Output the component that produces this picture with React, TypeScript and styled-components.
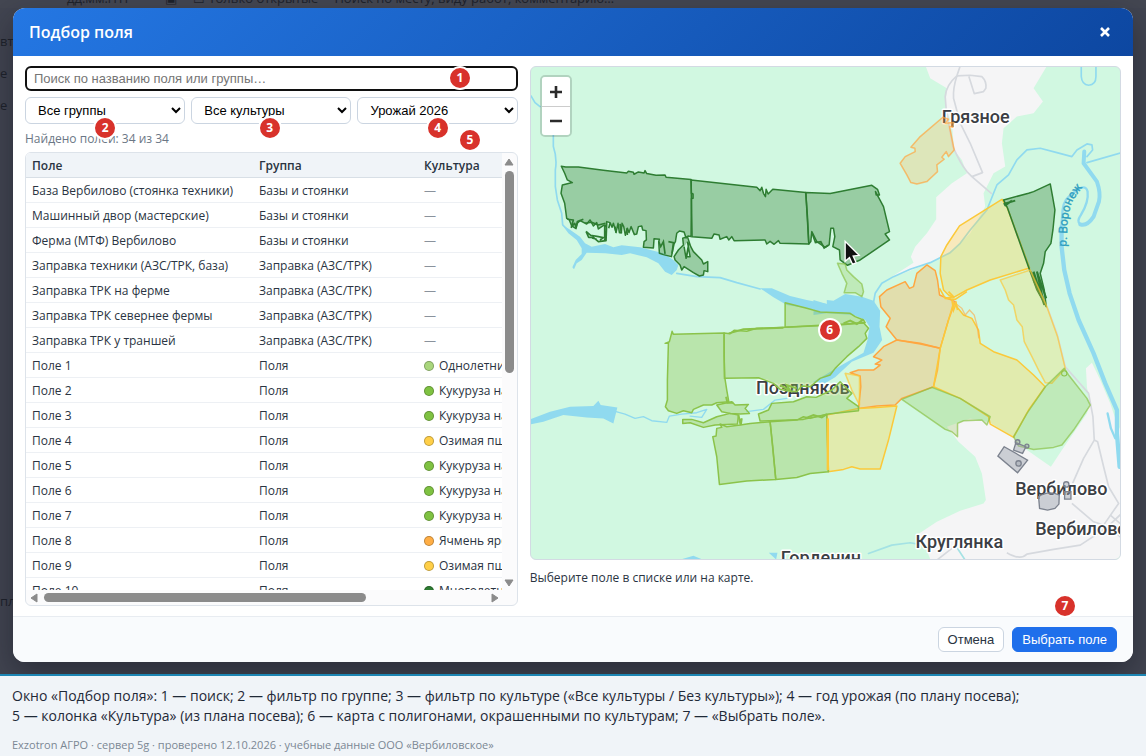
import React from "react";
import styled, { createGlobalStyle } from "styled-components";

const UI = `"Open Sans", "Noto Sans", sans-serif`;
const CONTROL = `"Liberation Sans", Arial, sans-serif`;

const GlobalStyle = createGlobalStyle`
  *, *::before, *::after { box-sizing: border-box; }
  body { margin: 0; font-family: ${UI}; color: #2a3442; background: #f0f4f8; }
`;

const Page = styled.div`
  display: flex;
  flex-direction: column;
  min-height: 100vh;
`;

/* Dimmed application with the dialog lying over it */
const Stage = styled.main`
  flex: 1;
  display: grid;
  background: #424551;
  overflow: hidden;
  & > * { grid-area: 1 / 1; min-width: 0; }
`;

const DimmedApp = styled.div`
  display: flex;
  flex-direction: column;
  overflow: hidden;
  font-size: 13px;
  color: #1e222b;
`;

const DimmedToolbar = styled.div`
  display: flex;
  gap: 16px;
  height: 8px;
  padding-left: 67px;
  line-height: 20px;
  white-space: nowrap;
  overflow: hidden;
  align-items: flex-end;
  background: #444752;
  & > span { flex: none; }
  & > span:first-child { width: 82px; }
`;

const DimmedRows = styled.div`
  display: flex;
  flex-direction: column;
  padding: 17px 0 0;
  line-height: 32px;
`;

const DimmedFoot = styled.div`
  margin-top: auto;
  padding-bottom: 64px;
  line-height: 18px;
`;

const Dialog = styled.section`
  display: flex;
  flex-direction: column;
  margin: 8px 13px 12px;
  border-radius: 12px;
  background: #fff;
  overflow: hidden;
  z-index: 1;
  box-shadow: 0 12px 32px rgba(15, 18, 28, 0.45);
`;

const DialogHeader = styled.header`
  display: flex;
  align-items: center;
  justify-content: space-between;
  height: 48px;
  padding: 0 20px 0 16px;
  background: linear-gradient(135deg, #2477e3, #0d47a1);
  color: #fff;
`;

const Title = styled.h1`
  margin: 0;
  font-size: 16px;
  font-weight: 600;
  line-height: 24px;
`;

const CloseButton = styled.button`
  display: flex;
  padding: 0;
  border: 0;
  background: none;
  color: #fff;
`;

const DialogBody = styled.div`
  flex: 1;
  display: grid;
  grid-template-columns: 5fr 6fr;
  gap: 12px;
  padding: 10px 12px;
`;

const Column = styled.div`
  display: flex;
  flex-direction: column;
  min-width: 0;
`;

const Anchor = styled.div`
  position: relative;
  min-width: 0;
`;

const Badge = styled.span<{ $left: string; $top: number }>`
  position: absolute;
  z-index: 2;
  left: ${(p) => p.$left};
  top: ${(p) => p.$top}px;
  width: 24px;
  height: 24px;
  margin: -12px 0 0 -12px;
  border: 2px solid #fff;
  border-radius: 50%;
  background: #d8322b;
  color: #fff;
  font-size: 12px;
  font-weight: 700;
  line-height: 20px;
  text-align: center;
`;

const SearchInput = styled.input`
  display: block;
  width: 100%;
  height: 25px;
  padding: 0 7px;
  border: 2px solid #101010;
  border-radius: 6px;
  outline: none;
  font: 13px ${CONTROL};
  &::placeholder { color: #757575; opacity: 1; }
`;

const Filters = styled.div`
  display: grid;
  grid-template-columns: repeat(3, 1fr);
  gap: 6px;
  margin-top: 6px;
`;

const Select = styled.select`
  display: block;
  width: 100%;
  height: 27px;
  padding: 0 8px;
  border: 1px solid #cbd5e1;
  border-radius: 6px;
  background-color: #fff;
  color: #000;
  font: 13px ${CONTROL};
`;

const Count = styled.p`
  margin: 6px 0 4px;
  font-size: 12px;
  line-height: 18px;
  color: #6b7785;
`;

const ListBox = styled.div`
  flex: 1 1 0;
  min-height: 0;
  display: grid;
  grid-template-columns: minmax(0, 1fr) 15px;
  grid-template-rows: minmax(0, 1fr) 15px;
  border: 1px solid #dde3ea;
  border-radius: 6px;
  background: #fbfbfc;
  overflow: hidden;
`;

const TableViewport = styled.div`
  overflow: hidden;
  background: #fff;
`;

const Table = styled.table`
  width: 700px;
  table-layout: fixed;
  border-collapse: separate;
  border-spacing: 0;
  font-size: 12px;
  line-height: 16px;
  white-space: nowrap;
`;

const HeadCell = styled.th<{ $width?: number }>`
  width: ${(p) => (p.$width ? `${p.$width}px` : "auto")};
  height: 25px;
  padding: 1px 6px 0;
  border-bottom: 1px solid #d8dfe6;
  background: #f0f4f8;
  font-weight: 600;
  text-align: left;
`;

const Cell = styled.td<{ $muted?: boolean }>`
  height: 25px;
  padding: 1px 6px 0;
  border-bottom: 1px solid #edf0f4;
  color: ${(p) => (p.$muted ? "#8a929c" : "inherit")};
`;

const Crop = styled.span`
  display: flex;
  align-items: center;
  gap: 5px;
`;

const Dot = styled.i<{ $color: string }>`
  flex: none;
  width: 10px;
  height: 10px;
  border: 1px solid rgba(0, 0, 0, 0.25);
  border-radius: 50%;
  background: ${(p) => p.$color};
`;

const ScrollBar = styled.div<{ $vertical?: boolean }>`
  display: flex;
  flex-direction: ${(p) => (p.$vertical ? "column" : "row")};
  align-items: center;
  justify-content: space-between;
  padding: ${(p) => (p.$vertical ? "5px 0 3px" : "0 3px 0 4px")};
  color: #8b8b8b;
`;

const ScrollTrack = styled.div<{ $vertical?: boolean }>`
  flex: 1;
  display: flex;
  flex-direction: ${(p) => (p.$vertical ? "column" : "row")};
  margin: ${(p) => (p.$vertical ? "5px 0" : "0 6px")};
`;

const Thumb = styled.div<{ $vertical?: boolean }>`
  width: ${(p) => (p.$vertical ? "9px" : "73%")};
  height: ${(p) => (p.$vertical ? "50%" : "9px")};
  border-radius: 5px;
  background: #8b8b8b;
`;

const MapBox = styled.div`
  position: relative;
  flex: 1;
  min-height: 0;
  border: 1px solid #d3dae3;
  border-radius: 6px;
  background: #d1f8e1;
  overflow: hidden;
`;

const MapDrawing = styled.svg`
  position: absolute;
  inset: 0;
  display: block;
  width: 100%;
  height: 100%;
`;

const ZoomControl = styled.div`
  position: absolute;
  top: 8px;
  left: 9px;
  display: flex;
  flex-direction: column;
  border: 2px solid rgba(0, 0, 0, 0.15);
  border-radius: 5px;
  background-clip: padding-box;
  overflow: hidden;
`;

const ZoomButton = styled.button`
  display: flex;
  align-items: center;
  justify-content: center;
  width: 28px;
  height: 29px;
  padding: 0;
  border: 0;
  background: #fff;
  color: #2b2b2b;
  & + & { border-top: 1px solid #ccc; }
`;

const MapHint = styled.p`
  min-height: 37px;
  margin: 9px 0 0;
  font-size: 12px;
  line-height: 18px;
`;

const DialogFooter = styled.footer`
  position: relative;
  display: flex;
  justify-content: flex-end;
  gap: 8px;
  padding: 10px 16px;
  border-top: 1px solid #e8ecf1;
  background: #f9fbfd;
`;

const Button = styled.button<{ $primary?: boolean }>`
  height: 25px;
  padding: 0 9px;
  border: 1px solid ${(p) => (p.$primary ? "#1f6feb" : "#cbd5e1")};
  border-radius: 6px;
  background: ${(p) => (p.$primary ? "#1f6feb" : "#fff")};
  color: ${(p) => (p.$primary ? "#fff" : "#2a3442")};
  font: 13px ${CONTROL};
`;

const Caption = styled.footer`
  padding: 10px 12px 2px;
  border-top: 2px solid #1d86b4;
  background: #f0f4f8;
`;

const CaptionText = styled.p`
  margin: 0;
  font-size: 14px;
  line-height: 20px;
  color: #1f2937;
`;

const CaptionMeta = styled.p`
  margin: 9px 0 0;
  font-size: 11px;
  line-height: 19px;
  color: #7b8794;
`;

const CROPS = {
  annual: { name: "Однолетние травы", color: "#a9d67c" },
  corn: { name: "Кукуруза на силос", color: "#7fc242" },
  wheat: { name: "Озимая пшеница", color: "#ffcf48" },
  barley: { name: "Ячмень яровой", color: "#ffae45" },
  perennial: { name: "Многолетние травы", color: "#2e7d32" },
};

type Row = { name: string; group: string; crop?: keyof typeof CROPS };

const ROWS: Row[] = [
  { name: "База Вербилово (стоянка техники)", group: "Базы и стоянки" },
  { name: "Машинный двор (мастерские)", group: "Базы и стоянки" },
  { name: "Ферма (МТФ) Вербилово", group: "Базы и стоянки" },
  { name: "Заправка техники (АЗС/ТРК, база)", group: "Заправка (АЗС/ТРК)" },
  { name: "Заправка ТРК на ферме", group: "Заправка (АЗС/ТРК)" },
  { name: "Заправка ТРК севернее фермы", group: "Заправка (АЗС/ТРК)" },
  { name: "Заправка ТРК у траншей", group: "Заправка (АЗС/ТРК)" },
  { name: "Поле 1", group: "Поля", crop: "annual" },
  { name: "Поле 2", group: "Поля", crop: "corn" },
  { name: "Поле 3", group: "Поля", crop: "corn" },
  { name: "Поле 4", group: "Поля", crop: "wheat" },
  { name: "Поле 5", group: "Поля", crop: "corn" },
  { name: "Поле 6", group: "Поля", crop: "corn" },
  { name: "Поле 7", group: "Поля", crop: "corn" },
  { name: "Поле 8", group: "Поля", crop: "barley" },
  { name: "Поле 9", group: "Поля", crop: "wheat" },
  { name: "Поле 10", group: "Поля", crop: "perennial" },
];

const WATER = "#90daef";
const LAND = "#f5f5f6";
const ROAD = "#d6d9de";

const DARK = "#2e7d32";
const GREEN = "#8bc34a";
const YELLOW = "#fbc93a";
const ORANGE = "#ffa640";

const FILLS: Record<string, string> = {
  [DARK]: "#2e7d32",
  [GREEN]: "#8bc34a",
  [YELLOW]: "#ffd54f",
  [ORANGE]: "#ffb04d",
};

function Field({ stroke, d, light }: { stroke: string; d: string; light?: boolean }) {
  return (
    <path
      d={d}
      fill={FILLS[stroke]}
      fillOpacity={light ? 0.26 : 0.35}
      stroke={stroke}
      strokeOpacity={light ? 0.7 : 1}
      strokeWidth="4.5"
      strokeLinejoin="round"
    />
  );
}

function FieldMap() {
  return (
    <MapDrawing viewBox="3 21 1767 1476" preserveAspectRatio="xMidYMid slice" role="img" aria-label="Карта полей">
      {/* settlements */}
      <g fill={LAND}>
        <path transform="translate(870 0)" d="M315 15 330 55 380 85 375 140 395 190 402 270 425 300 440 340 395 370 348 412 348 478 320 520 285 560 272 590 280 608 215 650 250 640 330 608 400 570 450 520 495 440 490 400 520 340 555 320 545 250 550 205 590 170 640 160 668 125 640 85 682 15Z" />
        <path transform="translate(870 690)" d="M797 235 815 218 840 270 870 340 890 400 912 440V820H335L318 775 290 735 350 695 420 662 490 640 497 630 485 550 465 500 415 455 380 410 450 385 505 395 580 440 620 480 692 530 725 480 800 370 808 340 800 290Z" />
      </g>
      {/* roads */}
      <g fill="none" stroke={ROAD} strokeWidth="5" strokeLinejoin="round">
        <g transform="translate(870 0)">
          <path d="M420 18 410 48Q378 75 375 110L378 150 398 260Q420 310 440 335L455 350 515 402" />
          <path d="M410 48Q398 85 400 115L420 190 450 250 487 338 455 350M410 48 450 46 485 50Q500 65 497 85L490 95 462 101 446 50" />
        </g>
        <g transform="translate(870 690)">
          <path d="M680 50 710 130 735 230 805 310 818 380 822 450 790 505 757 580M822 450 832 455 850 530 865 590 895 640 850 705 820 695 755 640" />
          <path d="M350 810 395 775M560 788Q600 812 620 792L700 778 780 765 860 712 902 672M870 675 905 705M862 706 905 745" />
        </g>
      </g>
      {/* rivers */}
      <g fill="none" stroke={WATER} strokeWidth="5" strokeLinecap="round" strokeLinejoin="round">
        <path d="M3 108 15 128 30 140M70 225 70 260Q82 295 76 330L76 380 82 420 95 460 98 495 115 512M440 640 500 650 570 653 620 668 690 687" />
        <path transform="translate(0 690)" strokeWidth="4" d="M258 365 285 372 315 385 340 380 365 392 410 397 418 378 455 372 500 368 530 358 515 382 480 378M650 365 700 358 735 330 770 325" />
        <path transform="translate(870 0)" d="M160 728 165 700 185 670 220 650 270 628 330 608 390 578 420 550 450 510 500 450 520 400 530 375 565 345 590 300 620 270 660 265 710 278 755 290 770 270 800 252 815 255 817 270 800 290M905 278 800 308M783 15V50Q785 75 805 76 827 75 827 50V15" />
        <path transform="translate(870 0)" strokeWidth="12" d="M792 275 790 310 830 365Q842 400 836 425L820 470Q800 500 780 493" />
        <path transform="translate(870 0)" strokeWidth="7" d="M780 493Q768 485 782 465 806 425 802 395 795 370 765 395 730 415 727 450L722 520" />
        <path transform="translate(870 0)" strokeWidth="13" d="M724 500V560L732 630 748 700 775 780 820 880 855 970 890 1050 890 1120 898 1220" />
        <path transform="translate(870 690)" strokeWidth="7" d="M862 370 872 415 885 445" />
        <path transform="translate(870 690)" stroke="#a4e2e4" d="M145 790 215 765 270 758 310 765M412 775 435 810" />
      </g>
      <g fill={WATER}>
        <path d="M97 495 118 508 150 530 165 550 185 560 225 552 250 562 275 556 330 562 370 572 400 580 430 600 445 615 440 630 425 645 405 635 385 610 350 592 300 580 275 585 225 580 170 578 155 600 140 610 132 628 127 622 137 600 155 582 155 565 140 540 115 520Z" />
        <path d="M690 685 725 685 780 708 830 720 905 735V758L830 745 770 735 730 712Z" />
        <path transform="translate(0 690)" d="M0 388 60 365 120 350 190 348 205 332 212 345 262 352 250 400 220 385 170 382 100 375 40 395 0 403ZM445 810 490 797 522 810ZM716 788 742 788 738 808Z" />
        <path transform="translate(870 690)" d="M20 42V30L40 32 75 12 125 20 160 32 180 62 178 110 186 150 160 188 95 215 45 262-20 300V275L70 222 130 188 142 150 148 110 135 90 100 75 20 70-20 75V30Z" />
      </g>
      {/* place names */}
      <g fontFamily="Roboto, sans-serif" fontWeight="500" fontSize="54" fill="#3b3e44" stroke="#fff" strokeWidth="9" strokeLinejoin="round" paintOrder="stroke">
        <text x="1235" y="190">Грязное</text>
        <text x="678" y="1002">Поздняков</text>
        <text x="1455" y="1306">Вербилово</text>
        <text x="1515" y="1424">Вербилово</text>
        <text x="1156" y="1463">Круглянка</text>
        <text x="752" y="1512">Горденин</text>
      </g>
      <path id="river-name" d="M1608 560 1612 490Q1616 440 1632 416T1670 366" fill="none" />
      <text fontFamily="Roboto, sans-serif" fontSize="36" fill="#2f9fc0" stroke="#2f9fc0" strokeWidth="1">
        <textPath href="#river-name">р. Воронеж</textPath>
      </text>
      {/* north-western fields */}
      <Field stroke={DARK} d="M94 319 107 321 145 321 220 331 290 339 295 334 310 337 312 343 325 336 342 339 345 332 350 341 378 346 405 345 408 352 483 359 484 400 489 402 489 415 484 416 483 530 474 528 468 534 462 516 448 513 440 520 436 545 432 552 428 570 424 590 400 584 388 580 386 545 388 538 372 536 370 564 340 562 342 545 349 540 348 512 338 510 335 498 325 500 320 522 313 524 303 500 297 518 292 505 286 526 281 500 276 490 274 518 268 518 264 490 258 518 250 490 246 502 240 488 230 485 228 500 223 495 205 507 200 488 190 498 180 480 170 492 150 482 142 490 138 506 125 498 118 480 110 475 104 430 93 400 97 375 127 368 112 360 104 340Z" />
      <path d="M168 514 176 532 190 532 205 545 228 542 230 490M168 514 182 526 205 530 226 534M186 534 200 538M224 495 224 540M210 540 218 534M112 478 130 480 124 502 134 490 138 502 142 485 160 478M165 490 185 487 205 495 226 490M240 490 236 505M255 500 258 518M270 492 274 520M290 505 292 525" fill="none" stroke={DARK} strokeWidth="5" strokeLinejoin="round" />
      <Field stroke={DARK} d="M432 590 445 570 460 555 458 535 472 530 482 560 490 575 515 600 520 612 533 605 533 635 522 632 520 645 508 648 490 638 462 620 455 630 450 615 435 600ZM462 560 468 595 476 550 470 590 480 590 472 545" />
      <Field stroke={DARK} d="M483 360 680 382 690 392 695 382 700 400 706 410 708 388 714 402 728 388 827 398 832 470 836 552 750 550 745 542 732 553 720 544 710 552 705 540 612 542 605 530 596 540 590 530 570 538 567 525 552 522 545 535 486 530Z" />
      <Field stroke={DARK} d="M827 398 900 401 1025 376 1042 388 1048 405 1038 405 1036 395 1060 440 1078 515 1065 522 1078 540 990 600 952 616 930 600 928 570 908 560 914 530 910 505 902 505 897 555 885 562 860 545 845 515 842 545 836 552Z" />
      <path d="M846 520 856 548 872 545 882 564 894 556M386 545 392 560 400 545 405 582M415 545 430 548 426 580" fill="none" stroke={DARK} strokeWidth="5" />
      {/* northern and eastern fields */}
      <g transform="translate(870 0)">
        <Field light stroke={ORANGE} d="M368 172 385 178 375 190 400 188 398 202 388 200 402 270 385 290 378 275 365 292 372 298 350 315 352 335 338 348 320 365 290 372 272 368 260 345 240 310 255 290 285 275 284 265 272 262 300 230Z" />
        <Field light stroke={GREEN} d="M52 610 75 612 80 630 100 650 125 672 130 695 125 710 105 698 72 698 80 670 65 640Z" />
        <Field stroke={YELLOW} d="M545 418 560 440 628 624 510 660 440 690 400 712 385 705 370 690 360 640 362 590 380 555 418 498Z" />
        <Field stroke={DARK} d="M550 420 625 400 640 395 690 372 697 410 704 450 698 510 692 550 675 575 670 610 660 640 672 690 678 740 650 690 628 630 610 580 562 445Z" />
        <path d="M550 432 585 422M553 438 575 422M632 635 655 690 640 635 672 735 650 635 678 715M640 660 670 725" stroke={DARK} strokeWidth="6" fill="none" />
      </g>
      <g transform="translate(870 690)">
        <Field light stroke={YELLOW} d="M540-30 630-60 680 50 712 140 735 235 695 280 675 278 655 240 635 200 612 155 606 110 590 90 580 45 565 30 555 0Z" />
        <Field stroke={ORANGE} d="M178 20 200 0 255-25 268-5 280-10 290-50 320-75 345-58 352-30 358 15 405 35 385 90 360 175 300 162 230 150 198 110 210 85 182 50Z" />
        <Field stroke={ORANGE} d="M230 150 300 160 360 175 352 240 340 290 245 325 225 345 170 348 115 355 122 290 120 258 90 248 115 240 160 240 180 225 165 222 185 210 160 200 190 170Z" />
        <Field light stroke={YELLOW} d="M75 250 118 258 118 345 95 300Z" />
        <Field stroke={YELLOW} d="M400 38 430 75 455 85 475 120 480 160 520 185 590 210 640 255 675 290 625 360 580 442 510 402 505 380 420 325 340 290 360 175Z" />
        <path d="M405 40 425 55 435 75 448 60 462 75 470 105 476 145" fill="none" stroke={ORANGE} strokeOpacity=".6" strokeWidth="4" />
        <path d="M358-5 375 25 400 20 385 5M375 25 405 28 440 5M395 28 400 60 408 40 412 60" fill="none" stroke={YELLOW} strokeWidth="5" />
        <Field light stroke={GREEN} d="M335 292 420 325 510 380 500 405 485 390 430 392 412 400 412 440 395 425 375 418 245 328Z" />
        <Field light stroke={GREEN} d="M732 235 745 255 800 325 810 345 760 420 725 465 700 472 640 478 595 468 580 440 620 370 675 290Z" />
        <circle cx="732" cy="250" r="8" fill="none" stroke={GREEN} strokeWidth="3" />
        <Field stroke={YELLOW} d="M20 375 115 355 170 352 230 348 205 450 180 537 120 537 95 530 70 538 24 545Z" />
      </g>
      {/* central and southern fields */}
      <g transform="translate(0 690)">
        <Field stroke={GREEN} d="M415 160 405 160 418 155 426 124 430 133 582 129 582 200 584 262 590 300 596 335 560 338 545 345 520 345 490 358 485 368 460 362 440 370 415 362 406 350 412 330 412 270Z" />
        <Field stroke={GREEN} d="M765 38 830 55 870 66 960 70 975 80 1000 90 1005 98 935 104 870 106 765 112Z" />
        <Field stroke={GREEN} d="M582 129 600 131 612 121 650 124 680 115 765 112 865 107 1000 98 1015 115 1005 130 1010 145 985 170 950 200 915 235 900 255 870 265 840 290 815 288 800 305 770 302 750 298 730 280 685 263 583 265Z" />
        <Field stroke={GREEN} d="M560 345 605 335 615 345 655 343 645 355 658 370 630 372 600 370 575 365Z" />
        <Field stroke={GREEN} d="M458 388 485 388 520 398 560 380 600 370 625 375 622 402 555 405 520 412 480 398 458 400Z" />
        <Field stroke={GREEN} d="M685 372 715 360 725 340 790 335 830 320 858 322 905 300 930 275 945 290 965 310 950 325 985 350 985 362 895 372 820 388 690 393Z" />
        <Field stroke={GREEN} d="M560 415 575 412 570 402 590 410 630 405 660 400 720 395 728 470 737 568 650 573 568 583 560 500 548 440 558 438Z" />
        <Field stroke={GREEN} d="M720 395 800 390 820 380 840 385 890 373 892 450 895 545 840 550 800 562 737 568Z" />
        <path d="M588 320 592 338 610 338M625 375 630 398 635 385 632 405M825 385 850 375 875 382 890 372M750 285 780 302 770 285 800 295M940 100 960 92 980 102 1000 88M596 130 640 118 680 116 760 113" fill="none" stroke={GREEN} strokeWidth="6" />
        <path d="M893 385V540" fill="none" stroke={YELLOW} strokeWidth="7" />
      </g>
      {/* farm yards */}
      <g transform="translate(870 690)" fill="#9aa0ab" fillOpacity=".45" stroke="#7c828e" strokeWidth="4">
        <path d="M552 470 622 510 592 548 533 498ZM587 458 617 470 607 490 580 480ZM655 620Q685 600 717 615L716 642 704 655 682 660 658 655ZM733 605H752V627H733Z" />
        <circle cx="595" cy="520" r="8" />
        <circle cx="592" cy="456" r="7" />
        <circle cx="620" cy="468" r="6" />
        <circle cx="738" cy="583" r="8" />
      </g>
      {/* pointer */}
      <path transform="translate(870 0)" d="M75 544V604L88 593 97 613 108 608 99 588 117 586Z" fill="#111" stroke="#fff" strokeWidth="4" />
    </MapDrawing>
  );
}

export default function App() {
  return (
    <Page>
      <GlobalStyle />
      <Stage>
        <DimmedApp aria-hidden="true">
          <DimmedToolbar>
            <span>дд.мм.гггг</span>
            <span>▣</span>
            <span>☐ Только открытые</span>
            <span>Поиск по месту, виду работ, комментарию…</span>
          </DimmedToolbar>
          <DimmedRows>
            <span>вт</span>
            <span>е</span>
            <span>е</span>
          </DimmedRows>
          <DimmedFoot>пла</DimmedFoot>
        </DimmedApp>
        <Dialog role="dialog" aria-labelledby="dialog-title">
          <DialogHeader>
            <Title id="dialog-title">Подбор поля</Title>
            <CloseButton type="button" aria-label="Закрыть">
              <svg width="16" height="16" viewBox="0 0 16 16" stroke="currentColor" strokeWidth="2.6">
                <path d="M4 4 12 12M12 4 4 12" />
              </svg>
            </CloseButton>
          </DialogHeader>
          <DialogBody>
            <Column>
              <Anchor>
                <SearchInput
                  type="text"
                  autoFocus
                  aria-label="Поиск"
                  placeholder="Поиск по названию поля или группы…"
                />
                <Badge $left="435px" $top={12}>1</Badge>
              </Anchor>
              <Filters>
                <Anchor>
                  <Select aria-label="Группа"><option>Все группы</option></Select>
                  <Badge $left="50%" $top={31}>2</Badge>
                </Anchor>
                <Anchor>
                  <Select aria-label="Культура"><option>Все культуры</option></Select>
                  <Badge $left="49%" $top={31}>3</Badge>
                </Anchor>
                <Anchor>
                  <Select aria-label="Год урожая"><option>Урожай 2026</option></Select>
                  <Badge $left="50%" $top={31}>4</Badge>
                </Anchor>
              </Filters>
              <Anchor>
                <Count>Найдено полей: 34 из 34</Count>
                <Badge $left="445px" $top={16}>5</Badge>
              </Anchor>
              <ListBox>
                <TableViewport>
                  <Table>
                    <thead>
                      <tr>
                        <HeadCell $width={227}>Поле</HeadCell>
                        <HeadCell $width={165}>Группа</HeadCell>
                        <HeadCell>Культура</HeadCell>
                      </tr>
                    </thead>
                    <tbody>
                      {ROWS.map((row) => (
                        <tr key={row.name}>
                          <Cell>{row.name}</Cell>
                          <Cell>{row.group}</Cell>
                          <Cell $muted={!row.crop}>
                            {row.crop ? (
                              <Crop>
                                <Dot $color={CROPS[row.crop].color} />
                                {CROPS[row.crop].name}
                              </Crop>
                            ) : (
                              "—"
                            )}
                          </Cell>
                        </tr>
                      ))}
                    </tbody>
                  </Table>
                </TableViewport>
                <ScrollBar $vertical>
                  <svg width="10" height="8" viewBox="0 0 10 8"><path d="M5 1 9 7H1Z" fill="currentColor" stroke="currentColor" strokeLinejoin="round" /></svg>
                  <ScrollTrack $vertical><Thumb $vertical /></ScrollTrack>
                  <svg width="10" height="8" viewBox="0 0 10 8"><path d="M5 7 1 1H9Z" fill="currentColor" stroke="currentColor" strokeLinejoin="round" /></svg>
                </ScrollBar>
                <ScrollBar>
                  <svg width="8" height="10" viewBox="0 0 8 10"><path d="M1 5 7 1V9Z" fill="currentColor" stroke="currentColor" strokeLinejoin="round" /></svg>
                  <ScrollTrack><Thumb /></ScrollTrack>
                  <svg width="8" height="10" viewBox="0 0 8 10"><path d="M7 5 1 1V9Z" fill="currentColor" stroke="currentColor" strokeLinejoin="round" /></svg>
                </ScrollBar>
              </ListBox>
            </Column>
            <Column>
              <MapBox>
                <FieldMap />
                <ZoomControl>
                  <ZoomButton type="button" aria-label="Приблизить">
                    <svg width="12" height="12" viewBox="0 0 12 12" stroke="currentColor" strokeWidth="2.6"><path d="M0 6H12M6 0V12" /></svg>
                  </ZoomButton>
                  <ZoomButton type="button" aria-label="Отдалить">
                    <svg width="12" height="12" viewBox="0 0 12 12" stroke="currentColor" strokeWidth="2.6"><path d="M0 6H12" /></svg>
                  </ZoomButton>
                </ZoomControl>
                <Badge $left="299px" $top={263}>6</Badge>
              </MapBox>
              <MapHint>Выберите поле в списке или на карте.</MapHint>
            </Column>
          </DialogBody>
          <DialogFooter>
            <Button type="button">Отмена</Button>
            <Button type="button" $primary>Выбрать поле</Button>
            <Badge $left="calc(100% - 68px)" $top={-11}>7</Badge>
          </DialogFooter>
        </Dialog>
      </Stage>
      <Caption>
        <CaptionText>
          Окно «Подбор поля»: 1 — поиск; 2 — фильтр по группе; 3 — фильтр по культуре («Все культуры / Без культуры»); 4 — год урожая (по плану посева);
          <br />
          5 — колонка «Культура» (из плана посева); 6 — карта с полигонами, окрашенными по культурам; 7 — «Выбрать поле».
        </CaptionText>
        <CaptionMeta>Exzotron АГРО · сервер 5g · проверено 12.10.2026 · учебные данные ООО «Вербиловское»</CaptionMeta>
      </Caption>
    </Page>
  );
}
